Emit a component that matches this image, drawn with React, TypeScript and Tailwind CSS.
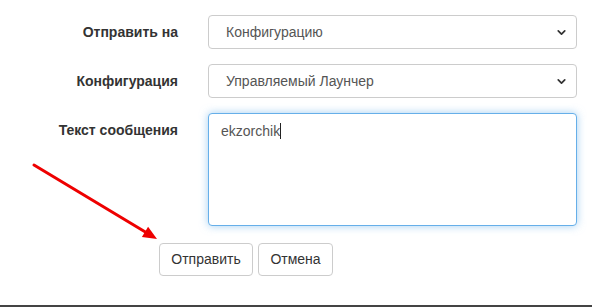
import { ChevronDown } from "lucide-react";

const rows = [
    { label: "Отправить на", value: "Конфигурацию" },
    { label: "Конфигурация", value: "Управляемый Лаунчер" },
];

function SelectBox({ value }: { value: string }) {
    return (
        <div className="flex h-[34px] w-[369px] items-center justify-between rounded-[4px] border border-[#ccc] bg-white pl-[17px] pr-[8px] text-[14px] text-[#555]">
            <span>{value}</span>
            <ChevronDown size={13} strokeWidth={3.2} className="text-[#333]" />
        </div>
    );
}

export default function App() {
    return (
        <div className="relative h-[307px] w-[592px] overflow-hidden border-b-2 border-[#444] bg-white font-['Liberation_Sans',Arial,sans-serif]">
            <div className="flex flex-col gap-[15px] pt-[15px]">
                {rows.map((row) => (
                    <div key={row.label} className="flex items-center">
                        <label className="w-[178px] text-right text-[14px] font-bold text-[#333]">{row.label}</label>
                        <div className="ml-[30px]">
                            <SelectBox value={row.value} />
                        </div>
                    </div>
                ))}

                <div className="flex items-start">
                    <label className="w-[178px] pt-[7px] text-right text-[14px] font-bold text-[#333]">Текст сообщения</label>
                    <div className="ml-[30px] h-[113px] w-[369px] rounded-[4px] border border-[#66afe9] bg-white px-[12px] pt-[6px] text-[14px] text-[#555] shadow-[0_0_8px_rgba(102,175,233,0.6)]">
                        ekzorchik<span className="inline-block h-[16px] w-px translate-y-[3px] bg-[#222]" />
                    </div>
                </div>
            </div>

            <div className="mt-[17px] flex gap-[5px] pl-[159px]">
                <button className="h-[33px] w-[94px] rounded-[4px] border border-[#ccc] bg-white text-[14px] text-[#333]">Отправить</button>
                <button className="h-[33px] w-[75px] rounded-[4px] border border-[#ccc] bg-white text-[14px] text-[#333]">Отмена</button>
            </div>

            {/* red pointer arrow */}
            <svg className="absolute left-0 top-0" width="592" height="307">
                <line x1="34" y1="165" x2="147" y2="233" stroke="#ee0000" strokeWidth="3" strokeLinecap="round" />
                <polygon points="157,239 141.9,237 148.1,226.7" fill="#ee0000" />
            </svg>
        </div>
    );
}
